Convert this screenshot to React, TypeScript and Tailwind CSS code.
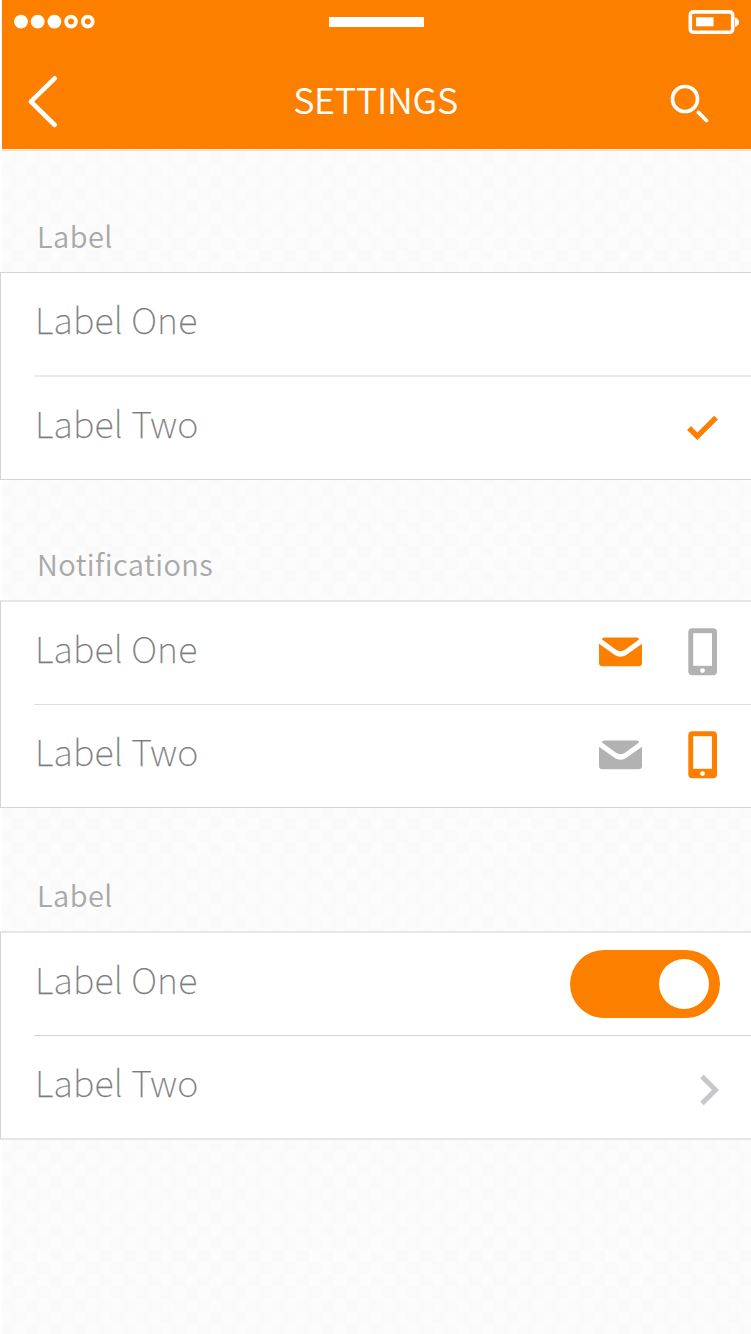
import type { ReactNode } from "react";

const ORANGE = "#fc7f00";
const GREY = "#b2b2b2";

function StatusBar() {
  return (
    <div className="flex h-[44px] items-center justify-between pr-[12px] pl-[12px]">
      <svg width="82" height="16" viewBox="0 0 82 16" fill="#fff">
        <circle cx="7" cy="7.6" r="6.9" />
        <circle cx="23.7" cy="7.6" r="6.9" />
        <circle cx="40.4" cy="7.6" r="6.9" />
        <circle cx="57" cy="7.6" r="4.9" fill="none" stroke="#fff" strokeWidth="3.8" />
        <circle cx="73.8" cy="7.6" r="4.9" fill="none" stroke="#fff" strokeWidth="3.8" />
      </svg>
      <div className="mr-auto ml-[233px] h-[10px] w-[95px] bg-white" />
      <svg width="51" height="26" viewBox="0 0 51 26" fill="none">
        <rect x="2.3" y="2.9" width="42.4" height="20.4" rx="3" stroke="#fff" strokeWidth="3.6" />
        <rect x="8" y="8.3" width="17.5" height="9" fill="#fff" />
        <path d="M47 8.6c2.400.5 4 2.300 4 4.700s-1.600 4.200-4 4.700z" fill="#fff" />
      </svg>
    </div>
  );
}

function Header() {
  return (
    <header className="ml-[2px] h-[149px] bg-[#fc7f00]">
      <StatusBar />
      <div className="flex h-[105px] items-start pr-[42px] pl-[25px]">
        <svg className="mt-[30px]" width="32" height="56" viewBox="0 0 32 56" fill="none" stroke="#fff" strokeWidth="4.6" strokeLinecap="round" strokeLinejoin="round">
          <path d="M27.700 4.300L3.900 27.600L27.700 51" />
        </svg>
        <h1 className="mt-[29px] ml-[23px] flex-1 text-center text-[36px] leading-[50px] font-[350] tracking-[-0.3px] text-white">SETTINGS</h1>
        <svg className="mt-[39px]" width="40" height="42" viewBox="0 0 40 42" fill="none" stroke="#fff">
          <circle cx="16" cy="16" r="12.500" strokeWidth="3.700" />
          <path d="M29.400 29.400L37.500 37.500" strokeWidth="3.700" strokeLinecap="round" />
        </svg>
      </div>
    </header>
  );
}

function Row({ label, children, divided, className }: { label: string; children?: ReactNode; divided?: string; className: string }) {
  return (
    <div className={`ml-[33px] flex items-start justify-between ${divided ?? ""} ${className}`}>
      <span className="mt-[18.5px] ml-px text-[36px] leading-[52px] font-thin tracking-[0.2px] text-[#7c7c7c] [-webkit-text-stroke:0.25px_#7c7c7c]">{label}</span>
      {children}
    </div>
  );
}

function SectionTitle({ children, className }: { children: ReactNode; className: string }) {
  return (
    <h2 className={`flex items-end pl-[35px] text-[29px] leading-[50px] font-[350] tracking-[0.45px] text-[#a9a9a9] ${className}`}>{children}</h2>
  );
}

function Mail({ color }: { color: string }) {
  return (
    <svg width="43" height="30" viewBox="0 0 43 30" fill={color}>
      <path d="M3 2.500C3 1.300 4 .5 5.200 .5H37.800C39 .5 40 1.300 40 2.500L26 12.800C23.500 14.700 19.500 14.700 17 12.800Z" />
      <path d="M0 6.800L15.800 18C19.200 20.200 23.800 20.200 27.200 18L43 6.800V26.300C43 28 41.500 29.300 39.700 29.300H3.300C1.500 29.300 0 28 0 26.300Z" />
    </svg>
  );
}

function Phone({ color }: { color: string }) {
  return (
    <svg width="29" height="48" viewBox="0 0 29 48">
      <rect x=".3" y=".3" width="28.700" height="47" rx="4" fill={color} />
      <rect x="5.200" y="5.200" width="18.800" height="32.600" fill="#fff" />
      <circle cx="14.500" cy="42.600" r="2.400" fill="#fff" />
    </svg>
  );
}

function Channels({ mail, phone }: { mail: string; phone: string }) {
  return (
    <div className="mt-[26px] mr-[34px] flex items-center gap-[46px]">
      <Mail color={mail} />
      <Phone color={phone} />
    </div>
  );
}

function Toggle() {
  return (
    <div className="mt-[16.500px] mr-[31px] flex h-[68.500px] w-[150.500px] items-center justify-end rounded-full bg-[#fc7f00] pr-[11.500px]">
      <div className="size-[50px] rounded-full bg-white" />
    </div>
  );
}

export default function App() {
  return (
    <div className="flex h-[1334px] w-[751px] flex-col overflow-hidden bg-white font-['Noto_Sans_CJK_SC','Noto_Sans_CJK_JP',sans-serif]">
      <Header />
      <div className="ml-[2px] h-px bg-[#fff8e4]" />
      <main className="ml-[2px] h-[1184px] border-t border-[#fedcba] bg-[conic-gradient(#fafafa_25%,#fcfcfc_0_50%,#fafafa_0_75%,#fcfcfc_0)] bg-[size:24.700px_24.700px] bg-[position:-1.700px_0px]">
        <SectionTitle className="h-[109px]">Label</SectionTitle>
        <section className="mt-[12px] -ml-[2px] h-[208px] border border-r-0 border-[#d5d5d5] bg-white">
          <Row label="Label One" className="h-[104px]" divided="border-b-2 border-[#eaeaea]" />
          <Row label="Label Two" className="h-[102px]">
            <svg className="mt-[38px] mr-[33px]" width="31" height="26" viewBox="0 0 31 26" fill="none" stroke={ORANGE} strokeWidth="5.400">
              <path d="M2 13L10.300 21.300L29 2.600" />
            </svg>
          </Row>
        </section>

        <SectionTitle className="h-[108px]">Notifications</SectionTitle>
        <section className="mt-[12px] -ml-[2px] h-[208px] border border-t-2 border-r-0 border-[#d5d5d5] border-t-[#e6e6e6] bg-white">
          <Row label="Label One" className="h-[103px]" divided="border-b border-[#dedede]">
            <Channels mail={ORANGE} phone={GREY} />
          </Row>
          <Row label="Label Two" className="h-[102px]">
            <Channels mail={GREY} phone={ORANGE} />
          </Row>
        </section>

        <SectionTitle className="h-[111px]">Label</SectionTitle>
        <section className="mt-[12px] -ml-[2px] h-[209px] border border-y-2 border-r-0 border-y-[#e6e6e6] border-l-[#d5d5d5] bg-white">
          <Row label="Label One" className="h-[103px]" divided="border-b border-[#d5d5d5]">
            <Toggle />
          </Row>
          <Row label="Label Two" className="h-[102px]">
            <svg className="mt-[38px] mr-[31px]" width="20" height="32" viewBox="0 0 20 32" fill="none" stroke="#c7c7cc" strokeWidth="5">
              <path d="M2 2.500L15.500 16L2 29.500" />
            </svg>
          </Row>
        </section>
      </main>
    </div>
  );
}
